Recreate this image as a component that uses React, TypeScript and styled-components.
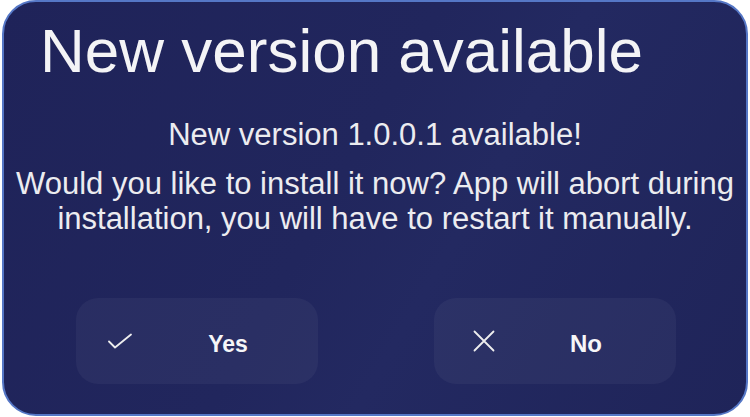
import React from "react";
import styled, { createGlobalStyle } from "styled-components";

const Global = createGlobalStyle`
  html, body { margin: 0; padding: 0; background: #ffffff; }
  body { font-family: "Liberation Sans", Arial, sans-serif; }
`;

const Panel = styled.div`
  box-sizing: border-box;
  margin: 0 2px 0 2px;
  height: 416px;
  border: 2px solid #5577c6;
  border-radius: 34px;
  background: linear-gradient(120deg, #1f2359 0%, #21265d 45%, #232961 60%, #1f2459 100%);
  padding: 14px 34px 0 34px;
  display: flex;
  flex-direction: column;
  color: #f4f4f6;
`;

const Title = styled.h1`
  margin: 0 0 0 2px;
  font-weight: 400;
  font-size: 62px;
  line-height: 70px;
  white-space: nowrap;
`;

const Subtitle = styled.p`
  margin: 31px 0 0 0;
  font-size: 31px;
  line-height: 36px;
  text-align: center;
  color: #ececf0;
  white-space: nowrap;
`;

const Body = styled.p`
  margin: 13px -30px 0 -30px;
  font-size: 31px;
  line-height: 35px;
  text-align: center;
  color: #ececf0;
`;

const Actions = styled.div`
  display: flex;
  justify-content: space-between;
  margin: 62px 36px 0 38px;
`;

const Button = styled.button`
  box-sizing: border-box;
  width: 242px;
  height: 86px;
  border: none;
  border-radius: 22px;
  background: rgba(255, 255, 255, 0.045);
  color: #f6f6f8;
  display: flex;
  align-items: center;
  padding: 0 0 0 33px;
  font-family: "Liberation Sans", Arial, sans-serif;
  cursor: pointer;
`;

const IconBox = styled.span<{ $shift: number }>`
  width: 28px;
  display: flex;
  justify-content: center;
  align-items: center;
  margin-left: ${(p) => p.$shift}px;
  margin-right: ${(p) => -p.$shift}px;
`;

const Label = styled.span<{ $size: number }>`
  width: 120px;
  margin-left: 31px;
  text-align: center;
  font-weight: 700;
  font-size: ${(p) => p.$size}px;
  margin-top: 6px;
`;

const CheckIcon = () => (
  <svg width="24" height="16" viewBox="0 0 24 16" fill="none">
    <path d="M1 8.5 L7 14.5 L23 1.5" stroke="#eeeeee" strokeWidth="1.8" strokeLinecap="round" strokeLinejoin="round" />
  </svg>
);

const CrossIcon = () => (
  <svg width="22" height="22" viewBox="0 0 22 22" fill="none">
    <path d="M1.5 1.5 L20.5 20.5 M20.5 1.5 L1.5 20.5" stroke="#eeeeee" strokeWidth="1.8" strokeLinecap="round" />
  </svg>
);

export default function App() {
  return (
    <>
      <Global />
      <Panel>
        <Title>New version available</Title>
        <Subtitle>New version 1.0.0.1 available!</Subtitle>
        <Body>
          Would you like to install it now? App will abort during
          <br />
          installation, you will have to restart it manually.
        </Body>
        <Actions>
          <Button>
            <IconBox $shift={-3}>
              <CheckIcon />
            </IconBox>
            <Label $size={23}>Yes</Label>
          </Button>
          <Button>
            <IconBox $shift={3}>
              <CrossIcon />
            </IconBox>
            <Label $size={24}>No</Label>
          </Button>
        </Actions>
      </Panel>
    </>
  );
}
